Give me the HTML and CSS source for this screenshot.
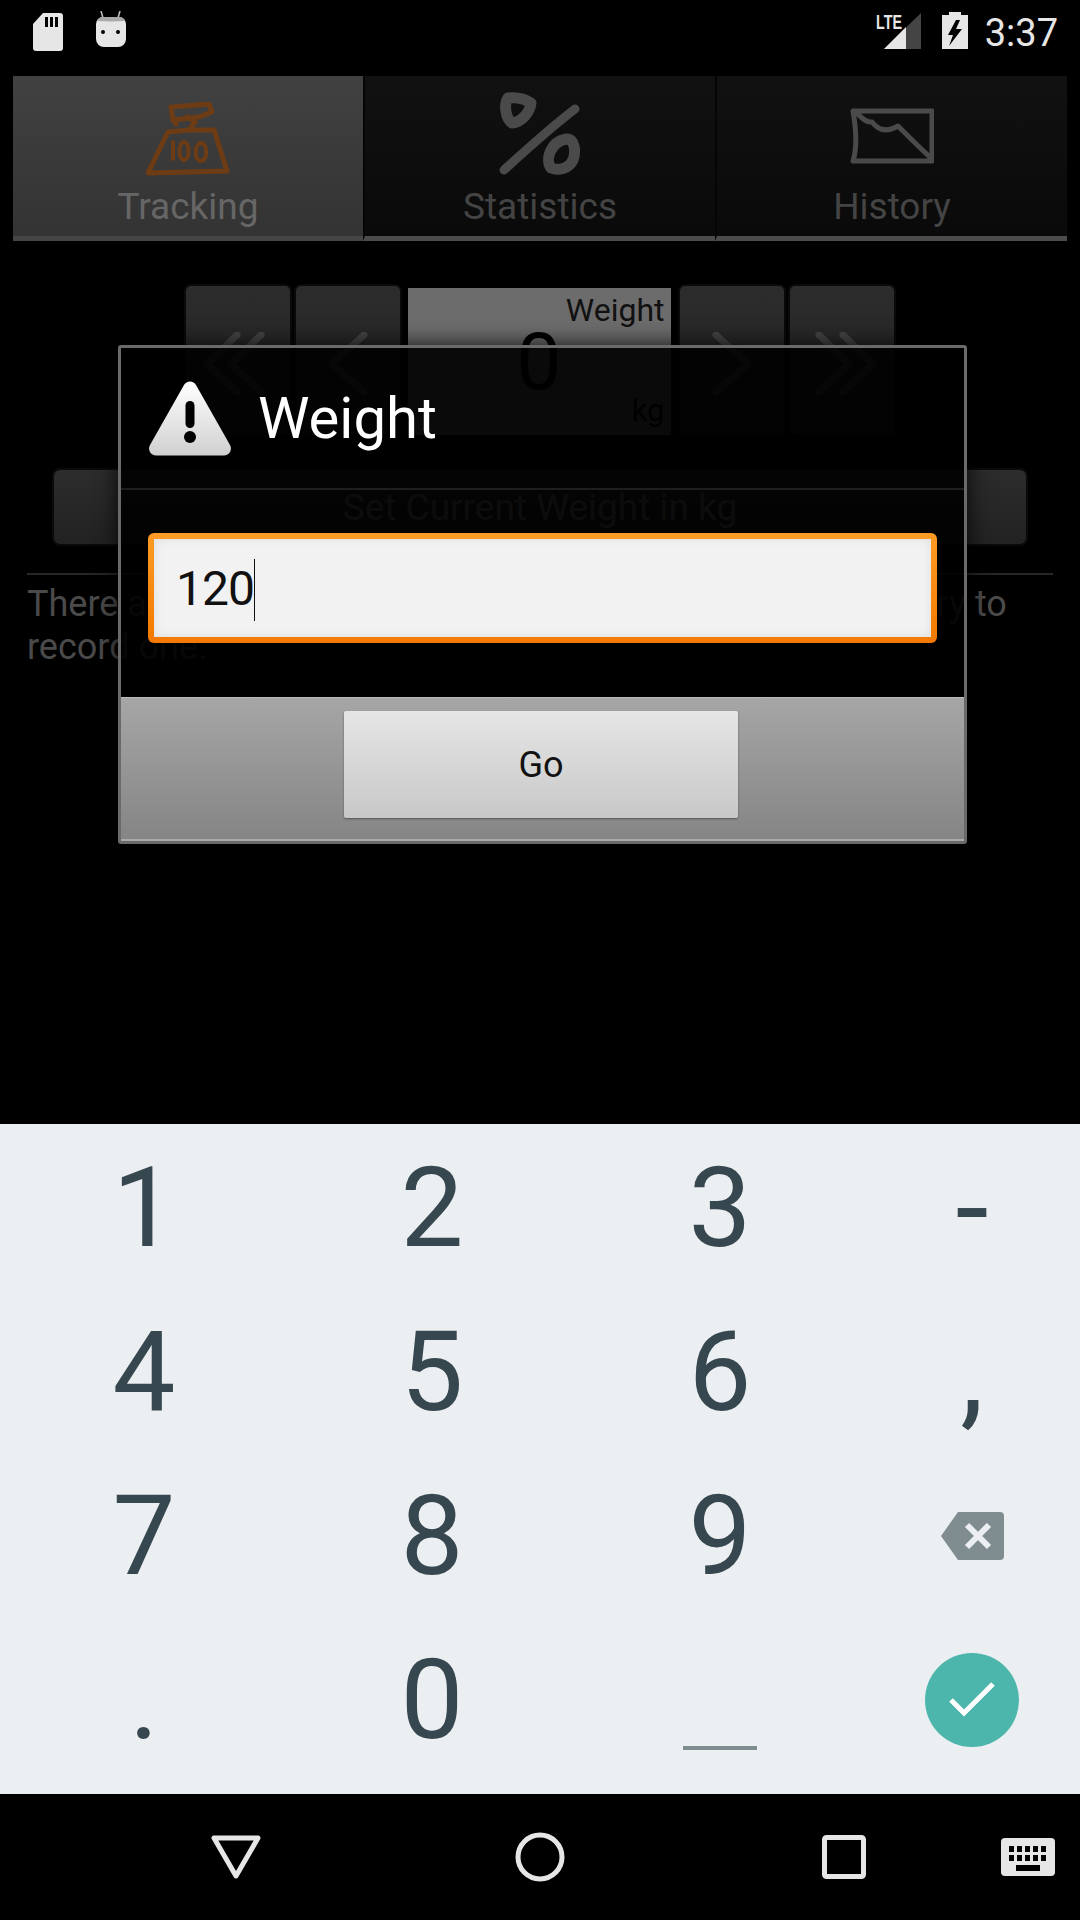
FILE: index.html
```html
<!DOCTYPE html>
<html lang="en">
<head>
    <meta charset="UTF-8">
    <meta name="viewport" content="width=device-width, initial-scale=1.0">
    <title>Weight</title>
    <link rel="stylesheet" href="styles.css">
</head>
<body>

<div class="screen">
    <!-- Status bar -->
    <div class="status-bar">
        <svg class="ico-sd" width="32" height="40" viewBox="0 0 32 40">
            <path d="M11 1H28a3 3 0 0 1 3 3V36a3 3 0 0 1-3 3H4a3 3 0 0 1-3-3V12Z" fill="#e6e6e6"/>
            <path d="M13 5h3v10h-3zM18 5h3v10h-3zM23 5h3v10h-3z" fill="#000"/>
        </svg>
        <svg class="ico-bot" width="32" height="38" viewBox="0 0 32 38">
            <path d="M6 0l2 7M25 0l-2 7" stroke="#bbb" stroke-width="1.6"/>
            <path d="M8 6H24a7 7 0 0 1 7 7V28a8 8 0 0 1-8 8H9a8 8 0 0 1-8-8V13a7 7 0 0 1 7-7Z" fill="#e6e6e6"/>
            <path d="M8 6H24a7 7 0 0 1 6 4a30 4 0 0 1-28 0a7 7 0 0 1 6-4Z" fill="#a8a8a8"/>
            <circle cx="8" cy="21" r="2" fill="#000"/>
            <circle cx="23" cy="21" r="2" fill="#000"/>
        </svg>
        <div class="status-right">
            <div class="signal">
                <span class="lte">LTE</span>
                <svg width="37" height="36" viewBox="0 0 37 36">
                    <path d="M37 0V36H0Z" fill="#444"/>
                    <path d="M22 14V36H0Z" fill="#e6e6e6"/>
                </svg>
            </div>
            <svg class="ico-batt" width="26" height="37" viewBox="0 0 26 37">
                <path d="M7 0H19V3H26V37H0V3H7Z" fill="#e6e6e6"/>
                <path d="M14 8L6 23H11L7 34L20 17H14L18 8Z" fill="#000"/>
            </svg>
            <span class="clock">3:37</span>
        </div>
    </div>

    <div class="main">
        <!-- Tabs -->
        <div class="tabs">
            <div class="tab tab-active">
                <svg class="tab-ico" width="84" height="74" viewBox="0 0 84 74">
                    <g fill="none" stroke="#6e3c14" stroke-width="5" stroke-linejoin="round" stroke-linecap="round">
                        <path d="M25 5L63 2L66 10L53 15L27 18ZM41 15L49 20L43 28M27 18L30 22"/>
                        <path d="M43 28L22 30L2 71L81 69L68 28Z"/>
                        <path d="M27 40V57M38 40c-6 1-6 18 0 18c6 0 6-18 0-18ZM55 41c-7 1-7 18 0 18c7 0 7-18 0-18Z" stroke-width="4"/>
                    </g>
                </svg>
                <span class="tab-label">Tracking</span>
            </div>
            <div class="tab">
                <svg class="tab-ico" width="84" height="84" viewBox="0 0 84 84">
                    <g fill="none" stroke="#4a4a4a" stroke-linecap="round" stroke-linejoin="round">
                        <path d="M6 78C28 58 52 36 77 17" stroke-width="9"/>
                        <path d="M10 6C18 5 27 7 33 11C32 20 24 30 14 31C7 26 6 12 10 6Z" stroke-width="11"/>
                        <path d="M68 47C77 46 78 60 75 68C71 77 60 79 53 76C47 68 52 50 68 47Z" stroke-width="11"/>
                    </g>
                </svg>
                <span class="tab-label tab-label-dim">Statistics</span>
            </div>
            <div class="tab">
                <svg class="tab-ico tab-ico-history" width="84" height="56" viewBox="0 0 84 56">
                    <path d="M3 3H82V53H3C7 40 6 20 3 3ZM3 3C10 6 14 15 22 14C28 22 36 25 48 18C60 30 72 42 82 51" fill="none" stroke="#4a4a4a" stroke-width="5" stroke-linejoin="round" stroke-linecap="round"/>
                </svg>
                <span class="tab-label tab-label-dim">History</span>
            </div>
        </div>

        <!-- Stepper -->
        <div class="stepper">
            <div class="step-btn"><svg width="70" height="64" viewBox="0 0 70 64"><path d="M34 3L4 32L34 60M58 3L28 32L58 60" class="chev"/></svg></div>
            <div class="step-btn"><svg width="44" height="64" viewBox="0 0 44 64"><path d="M38 3L6 32L38 60" class="chev"/></svg></div>
            <div class="weight-field">
                <span class="wf-label">Weight</span>
                <span class="wf-value">0</span>
                <span class="wf-unit">kg</span>
            </div>
            <div class="step-btn"><svg width="44" height="64" viewBox="0 0 44 64"><path d="M6 3L38 32L6 60" class="chev"/></svg></div>
            <div class="step-btn"><svg width="70" height="64" viewBox="0 0 70 64"><path d="M12 3L42 32L12 60M36 3L66 32L36 60" class="chev"/></svg></div>
        </div>

        <div class="set-btn">Set Current Weight in kg</div>
        <div class="rule"></div>
        <p class="notice">There are no weights. Use the button above to add an entry to<br>record one.</p>

        <!-- Dialog over the page -->
        <div class="dialog">
            <div class="dialog-head">
                <svg width="84" height="75" viewBox="0 0 84 75">
                    <defs>
                        <linearGradient id="warnFill" x1="0" y1="0" x2="0" y2="1">
                            <stop offset="0" stop-color="#fff"/>
                            <stop offset="1" stop-color="#d0d0d0"/>
                        </linearGradient>
                    </defs>
                    <path d="M36 4a7 7 0 0 1 12 0L82 64a7 7 0 0 1-6 10.500H8A7 7 0 0 1 2 64Z" fill="url(#warnFill)"/>
                    <rect x="37.500" y="20" width="9" height="27" rx="4.500" fill="#000"/>
                    <circle cx="42" cy="56" r="6" fill="#000"/>
                </svg>
                <span class="dialog-title">Weight</span>
            </div>
            <div class="dialog-body">
                <div class="input">
                    <div class="input-inner"><span class="input-text">120</span><span class="caret"></span></div>
                </div>
            </div>
            <div class="dialog-foot">
                <div class="go-btn">Go</div>
            </div>
        </div>
    </div>

    <!-- Number keyboard -->
    <div class="keyboard">
        <div class="key">1</div><div class="key">2</div><div class="key">3</div><div class="key key-sym">-</div>
        <div class="key">4</div><div class="key">5</div><div class="key">6</div><div class="key key-sym">,</div>
        <div class="key">7</div><div class="key">8</div><div class="key">9</div>
        <div class="key">
            <svg width="63" height="48" viewBox="0 0 63 48">
                <path d="M17 0H59a4 4 0 0 1 4 4V44a4 4 0 0 1-4 4H17L0 24Z" fill="#7f8c90"/>
                <path d="M26 13L48 35M48 13L26 35" stroke="#eceff1" stroke-width="6"/>
            </svg>
        </div>
        <div class="key">.</div><div class="key">0</div><div class="key"><span class="space-bar"></span></div>
        <div class="key">
            <div class="enter">
                <svg width="48" height="38" viewBox="0 0 48 38">
                    <path d="M3 19L16 32L45 3" fill="none" stroke="#fff" stroke-width="5"/>
                </svg>
            </div>
        </div>
    </div>

    <!-- Nav bar -->
    <div class="nav-bar">
        <svg class="nav-back" width="50" height="44" viewBox="0 0 50 44">
            <path d="M3 3H47L25 41Z" fill="none" stroke="#e6e6e6" stroke-width="5" stroke-linejoin="round"/>
        </svg>
        <svg class="nav-home" width="50" height="50" viewBox="0 0 50 50">
            <circle cx="25" cy="25" r="22" fill="none" stroke="#e6e6e6" stroke-width="5"/>
        </svg>
        <svg class="nav-recent" width="44" height="44" viewBox="0 0 44 44">
            <rect x="2.500" y="2.500" width="39" height="39" rx="2" fill="none" stroke="#e6e6e6" stroke-width="5"/>
        </svg>
        <svg class="nav-kbd" width="54" height="38" viewBox="0 0 54 38">
            <rect width="54" height="38" rx="4" fill="#e6e6e6"/>
            <path d="M8 8h5v6H8zM16 8h5v6h-5zM24 8h5v6h-5zM32 8h5v6h-5zM40 8h5v6h-5zM8 17h5v6H8zM16 17h5v6h-5zM24 17h5v6h-5zM32 17h5v6h-5zM40 17h5v6h-5zM15 27h24v6H15z" fill="#000"/>
        </svg>
    </div>
</div>

</body>
</html>
```
FILE: styles.css
```css
* {
    box-sizing: border-box;
}
body {
    margin: 0;
    background-color: #000;
    font-family: Roboto, "Liberation Sans", sans-serif;
}
.screen {
    display: flex;
    flex-direction: column;
    width: 1080px;
    height: 1920px;
    overflow: hidden;
}

/* Status bar */
.status-bar {
    display: flex;
    align-items: flex-start;
    height: 76px;
    padding: 12px 22px 0 32px;
    flex-shrink: 0;
}
.ico-bot {
    margin: -1px 0 0 31px;
}
.status-right {
    display: flex;
    align-items: flex-start;
    margin-left: auto;
}
.signal {
    position: relative;
    display: flex;
    justify-content: flex-end;
    width: 45px;
    height: 36px;
    margin-top: 1px;
}
.lte {
    position: absolute;
    left: 0;
    top: 0;
    font-family: "Liberation Sans", sans-serif;
    font-size: 21px;
    font-weight: 700;
    line-height: 17px;
    color: #e6e6e6;
    transform: scaleX(0.68);
    transform-origin: left top;
}
.ico-batt {
    margin-left: 21px;
}
.clock {
    margin-left: 17px;
    font-size: 38px;
    line-height: 42px;
    color: #e6e6e6;
}

/* Main content */
.main {
    position: relative;
    flex: 1;
}
.tabs {
    display: flex;
    height: 165px;
    margin: 0 13px;
}
.tab {
    display: flex;
    flex-direction: column;
    align-items: center;
    justify-content: flex-end;
    flex: 1;
    background: linear-gradient(#111, #0a0a0a);
    border-bottom: 5px solid #4c4c4c;
    border-left: 2px solid #050505;
    padding-bottom: 7px;
}
.tab-active {
    flex: none;
    width: 350px;
    background: linear-gradient(#414141, #333);
    border-left: none;
    border-bottom-color: #454545;
}
.tab-ico {
    margin-bottom: 9px;
}
.tab-ico-history {
    margin-bottom: 21px;
}
.tab-label {
    font-size: 37px;
    line-height: 44px;
    color: #666;
}
.tab-label-dim {
    color: #444;
}
.stepper {
    display: flex;
    justify-content: center;
    gap: 6px;
    height: 148px;
    margin-top: 45px;
    padding-right: 1px;
}
.step-btn {
    display: flex;
    align-items: flex-start;
    justify-content: center;
    width: 104px;
    height: 148px;
    padding-top: 46px;
    border-radius: 5px;
    background: linear-gradient(#2c2c2c, #222);
    box-shadow: 0 0 0 2px #0a0a0a;
}
.chev {
    fill: none;
    stroke: #454545;
    stroke-width: 7;
    stroke-linecap: round;
    stroke-linejoin: round;
}
.weight-field {
    display: flex;
    flex-direction: column;
    width: 263px;
    height: 147px;
    margin: 2px 3px 0 2px;
    padding: 0 6px;
    background-color: #6c6c6c;
}
.wf-label {
    align-self: flex-end;
    font-size: 32px;
    line-height: 44px;
    color: #111;
}
.wf-value {
    align-self: center;
    margin-top: -5px;
    font-size: 80px;
    line-height: 70px;
    color: #000;
}
.wf-unit {
    align-self: flex-end;
    margin-top: -4px;
    font-size: 31px;
    line-height: 36px;
    color: #000;
}
.set-btn {
    display: flex;
    align-items: center;
    justify-content: center;
    height: 74px;
    margin: 36px 54px 0 54px;
    border-radius: 6px;
    background: linear-gradient(#2c2c2c, #222);
    box-shadow: 0 0 0 2px #0a0a0a;
    font-size: 37px;
    color: #777;
}
.rule {
    height: 2px;
    margin: 29px 27px 0 27px;
    background-color: #262626;
}
.notice {
    margin: 8px 27px 0 27px;
    font-size: 36px;
    line-height: 43px;
    color: #4a4a4a;
}

/* Dialog */
.dialog {
    position: absolute;
    left: 118px;
    top: 269px;
    display: flex;
    flex-direction: column;
    width: 849px;
    height: 499px;
    background-color: rgba(0, 0, 0, 0.9);
    border: 3px solid #6a6a6a;
    border-radius: 3px;
    box-shadow: 0 0 22px rgba(0, 0, 0, 0.85);
}
.dialog-head {
    display: flex;
    align-items: center;
    gap: 26px;
    height: 142px;
    padding-left: 27px;
    border-bottom: 2px solid #1e1e1e;
}
.dialog-title {
    font-size: 58px;
    color: #fff;
}
.dialog-body {
    flex: 1;
    padding: 43px 27px 0 27px;
}
.input {
    height: 110px;
    padding: 6px;
    border-radius: 6px;
    background: linear-gradient(#fb9c24, #f47900);
}
.input-inner {
    display: flex;
    align-items: center;
    height: 100%;
    padding-left: 22px;
    background: #f2f2f2;
    box-shadow: inset 0 0 10px #ddd;
}
.input-text {
    font-size: 48px;
    letter-spacing: -1px;
    color: #111;
}
.caret {
    width: 1px;
    height: 62px;
    margin-top: 4px;
    background-color: #111;
}
.dialog-foot {
    display: flex;
    justify-content: center;
    height: 144px;
    padding: 13px 3px 0 0;
    background: linear-gradient(#a6a6a6, #858585);
    border-top: 1px solid #bbb;
    border-bottom: 2px solid #aaa;
}
.go-btn {
    display: flex;
    align-items: center;
    justify-content: center;
    width: 394px;
    height: 107px;
    border-radius: 2px;
    background: linear-gradient(#e6e6e6, #c8c8c8);
    box-shadow: 0 1px 2px #555;
    font-size: 36px;
    color: #111;
}

/* Keyboard */
.keyboard {
    display: grid;
    grid-template-columns: 288px 288px 288px 216px;
    grid-auto-rows: 164px;
    height: 670px;
    padding-top: 2px;
    flex-shrink: 0;
    background-color: #eceff1;
}
.key {
    display: flex;
    align-items: center;
    justify-content: center;
    font-size: 112px;
    line-height: 1;
    color: #37474f;
}
.key-sym {
    font-size: 120px;
}
.space-bar {
    display: block;
    width: 74px;
    height: 4px;
    margin-top: 96px;
    background-color: #7f8c90;
}
.enter {
    display: flex;
    align-items: center;
    justify-content: center;
    width: 94px;
    height: 94px;
    border-radius: 50%;
    background-color: #4db6ac;
}

/* Nav bar */
.nav-bar {
    display: flex;
    align-items: center;
    height: 126px;
    flex-shrink: 0;
    padding-left: 211px;
}
.nav-home {
    margin-left: 254px;
}
.nav-recent {
    margin-left: 257px;
}
.nav-kbd {
    margin-left: 135px;
}
```
